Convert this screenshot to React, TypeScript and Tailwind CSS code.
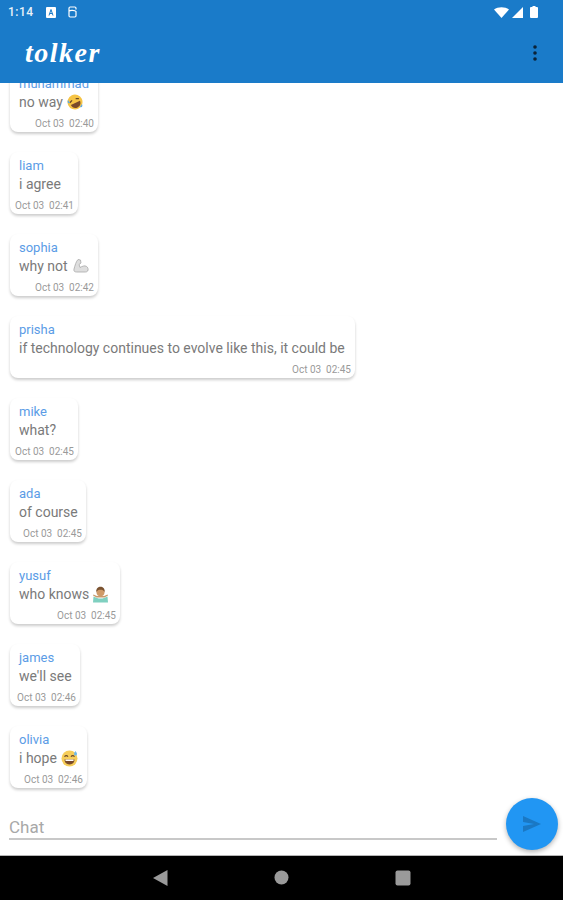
import React from "react";

type Msg = { name: string; text: string; time: string; w: string; emoji?: React.ReactNode };

const Laugh = () => (
  <svg width="16" height="16" viewBox="0 0 16 16" className="ml-[4px] shrink-0">
    <g transform="rotate(-25 8 8)">
      <circle cx="8" cy="8" r="7.5" fill="#f6c445" />
      <path d="M3 9h10c0 3-2 5-5 5s-5-2-5-5z" fill="#7a4a2a" />
      <path d="M3 6.5l3-1.2M13 6.500l-3-1.200" stroke="#6b4a2a" strokeWidth="1.300" />
    </g>
    <path d="M1 6c-1 2 0 4 2 3zM15 10c1 2 0 4-2 3z" fill="#5aa9e6" />
  </svg>
);
const Muscle = () => (
  <svg width="17" height="16" viewBox="0 0 17 16" className="ml-[4px] shrink-0">
    <path d="M6 1.500c-2 2-3 6-4 9.500-.5 2 .5 3 2.500 3h9c2 0 3-1.500 2.500-3.500-.5-2-2.500-3-4.500-2.500-1.500.3-2.500 1-3.500 1.500L7 6.500l2-1.500L8.500 2 6 1.500z" fill="#dedede" stroke="#a8a8a8" strokeWidth="0.800" />
  </svg>
);
const Shrug = () => (
  <svg width="17" height="17" viewBox="0 0 17 17" className="ml-[3px] shrink-0">
    <path d="M1 16.500l.5-6 3.500 1.500c2 .8 5 .8 7 0l3.500-1.500.5 6z" fill="#7fd0c0" />
    <path d="M1 9.500l3.500 2h8l3.500-2-.5-1-3.500 1.500h-7L1.500 8.500z" fill="#c89a6c" />
    <circle cx="8.500" cy="6.200" r="4" fill="#cf9a68" />
    <path d="M4.300 6C4 2.500 6.200.7 8.500.7s4.500 1.800 4.200 5.300c-1-1.700-2.200-2.300-4.200-2.300s-3.200.6-4.200 2.300z" fill="#7a5230" />
  </svg>
);
const Sweat = () => (
  <svg width="17" height="17" viewBox="0 0 17 17" className="ml-[4px] shrink-0">
    <circle cx="8.500" cy="8.500" r="8" fill="#f6cd5a" />
    <path d="M3.500 9.500h10c0 3-2 5-5 5s-5-2-5-5z" fill="#7a4a2a" />
    <path d="M4.500 9.500h8v1.500h-8z" fill="#fff" />
    <path d="M3.500 6.800c1-1.600 2.500-1.600 3.500 0M10 6.800c1-1.600 2.500-1.600 3.500 0" stroke="#6b4a2a" strokeWidth="1.100" fill="none" />
    <path d="M14.500 1c-1 1.500-1.500 2.300-1.500 3a1.500 1.500 0 0 0 3 0c0-.7-.5-1.500-1.500-3z" fill="#6db8ea" />
  </svg>
);

const messages: Msg[] = [
  { name: "muhammad", text: "no way", time: "Oct 03  02:40", w: "w-[88px]", emoji: <Laugh /> },
  { name: "liam", text: "i agree", time: "Oct 03  02:41", w: "w-[68px]" },
  { name: "sophia", text: "why not", time: "Oct 03  02:42", w: "w-[88px]", emoji: <Muscle /> },
  { name: "prisha", text: "if technology continues to evolve like this, it could be", time: "Oct 03  02:45", w: "w-[345px]" },
  { name: "mike", text: "what?", time: "Oct 03  02:45", w: "w-[68px]" },
  { name: "ada", text: "of course", time: "Oct 03  02:45", w: "w-[76px]" },
  { name: "yusuf", text: "who knows", time: "Oct 03  02:45", w: "w-[110px]", emoji: <Shrug /> },
  { name: "james", text: "we'll see", time: "Oct 03  02:46", w: "w-[70px]" },
  { name: "olivia", text: "i hope", time: "Oct 03  02:46", w: "w-[77px]", emoji: <Sweat /> },
];

function Bubble({ m }: { m: Msg }) {
  return (
    <div className={`${m.w} h-[62px] shrink-0 rounded-[8px] bg-white pt-[5px] pr-[4px] shadow-[0_2px_3px_rgba(0,0,0,0.2)]`}>
      <div className="h-[17px] pl-[9px] text-[13px] leading-[18px] whitespace-nowrap text-[#5b9ce6]">{m.name}</div>
      <div className="flex h-[20px] items-center pl-[9px] text-[14px] leading-[20px] whitespace-nowrap text-[#7a7a7a]">
        {m.text}
        {m.emoji}
      </div>
      <div className="mt-[5px] text-right text-[10px] leading-[14px] whitespace-pre text-[#9a9a9a]">{m.time}</div>
    </div>
  );
}

export default function App() {
  return (
    <div className="flex h-[900px] w-[563px] flex-col overflow-hidden bg-white font-['Roboto',sans-serif]">
      <header className="z-10 h-[83px] shrink-0 bg-[#1a7bc9]">
        <div className="flex h-[24px] items-center justify-between pr-[25px] pl-[8px] text-white">
          <div className="flex items-center">
            <span className="text-[12px] font-medium tracking-[0.5px] opacity-90">1:14</span>
            <svg width="10" height="11" viewBox="0 0 10 11" className="ml-[12px]">
              <rect width="10" height="11" rx="1" fill="#fff" />
              <path d="M3 8.500l2-6 2 6M3.800 6.500h2.400" stroke="#1a7bc9" strokeWidth="1" fill="none" />
            </svg>
            <svg width="9" height="12" viewBox="0 0 9 12" className="ml-[12px]">
              <path d="M1 9.800V2.200C1 1.500 1.500 1 2.200 1h4.600C7.500 1 8 1.500 8 2.200v1.300M1 5c1-1 6-1 7 .5v4.300c0 .7-.5 1.200-1.200 1.200H2.200C1.500 11 1 10.500 1 9.800" stroke="#fff" strokeWidth="1.200" fill="none" />
            </svg>
          </div>
          <div className="flex items-center gap-[2px]">
            <svg width="15" height="11" viewBox="0 0 15 11"><path d="M0 2.500C4 -.5 11 -.5 15 2.500L7.500 11z" fill="#fff" /></svg>
            <svg width="11" height="11" viewBox="0 0 11 11" className="ml-[1px]"><path d="M11 0v11H0z" fill="#fff" /></svg>
            <svg width="8" height="12" viewBox="0 0 8 12" className="ml-[5px]"><path d="M2.500 0h3v1H7a1 1 0 0 1 1 1v9a1 1 0 0 1-1 1H1a1 1 0 0 1-1-1V2a1 1 0 0 1 1-1h1.500z" fill="#fff" /></svg>
          </div>
        </div>
        <div className="flex h-[59px] items-center justify-between pr-[26px] pl-[25px]">
          <span className="pb-[2px] font-['Liberation_Serif',serif] text-[28px] leading-none font-bold tracking-[1.5px] text-white italic">tolker</span>
          <svg width="4" height="16" viewBox="0 0 4 16" className="mb-[2px]">
            <circle cx="2" cy="2" r="1.800" fill="#0b2237" />
            <circle cx="2" cy="8" r="1.800" fill="#0b2237" />
            <circle cx="2" cy="14" r="1.800" fill="#0b2237" />
          </svg>
        </div>
      </header>

      <main className="flex min-h-0 flex-1 flex-col justify-end gap-[20px] overflow-hidden pb-[7px] pl-[10px]">
        {messages.map((m) => (
          <Bubble key={m.name} m={m} />
        ))}
      </main>

      <div className="flex h-[60px] shrink-0 items-start pr-[5px] pl-[9px]">
        <div className="mt-[13px] flex h-[32px] flex-1 items-end border-b-2 border-[#c8c8c8] text-[17px] leading-[22px] text-[#a8a8a8]">Chat</div>
        <div className="mt-[3px] ml-[9px] flex h-[52px] w-[52px] shrink-0 items-center justify-center rounded-full bg-[#2196f3] shadow-[0_2px_5px_rgba(0,0,0,0.3)]">
          <svg width="18" height="16" viewBox="0 0 18 16"><path d="M0 0l18 8L0 16l0-6 11-2L0 6z" fill="#1a78c4" /></svg>
        </div>
      </div>

      <nav className="flex h-[45px] shrink-0 items-center justify-center gap-[106px] border-t border-[#b5b5b5] bg-black pb-[1px]">
        <svg width="15" height="16" viewBox="0 0 15 16"><path d="M14.500 0v16L0 8z" fill="#9a9a9a" /></svg>
        <svg width="15" height="15" viewBox="0 0 15 15"><circle cx="7.500" cy="7.500" r="7" fill="#9a9a9a" /></svg>
        <svg width="16" height="16" viewBox="0 0 16 16"><rect width="15" height="15" x="0.500" y="0.500" rx="2" fill="#9a9a9a" /></svg>
      </nav>
    </div>
  );
}
